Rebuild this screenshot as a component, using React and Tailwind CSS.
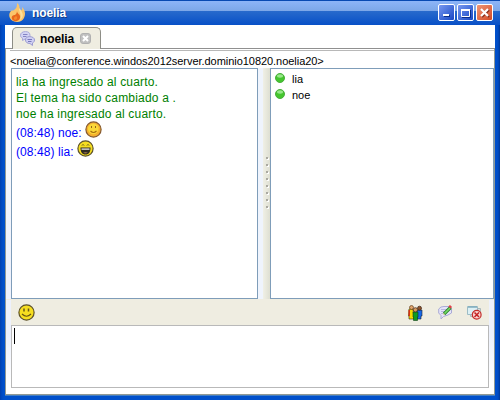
import React from "react";

function Flame() {
  return (
    <svg width="18" height="20" viewBox="0 0 18 20" className="block">
      <path d="M8 0C12 3 9 5 12 7C14 8 13 5 13 4C16 7 17 11 15 15C13 19 8 20 4 18C0 16-1 11 2 8C3 7 4 8 5 7C8 5 8 3 8 0Z" fill="#fbc56a" />
      <path d="M10 5C13 8 15 12 13 15L10 18C14 13 10 10 10 5Z" fill="#ffe09a" />
      <path d="M8 8C8 11 12 11 11 15C10 19 4 19 3 16C2 13 4 12 6 12C7 11 8 10 8 8Z" fill="#e8681c" />
      <path d="M7 13C9 14 8 17 6 17C4 16 5 14 7 13Z" fill="#f58a2c" />
    </svg>
  );
}

function Bubbles() {
  return (
    <svg width="15" height="15" viewBox="0 0 15 15" className="block">
      <path d="M5.500.6C8.500.6 10 2 10 4.300C10 7 7.500 8 5 8L2.500 9.500V7.200C1 6.500.5 5.500.5 4.300C.5 2 2.500.6 5.500.6Z" fill="#d4d4f4" stroke="#a8a8d8" />
      <path d="M3 3.500H7.500M3 5.500H6.500" stroke="#8484c4" />
      <path d="M9.500 5.600C12.500 5.600 14.500 7 14.500 9C14.500 10.500 13.500 11.500 12.500 12V14.500L10 12.500C7 12.500 5.500 11 5.500 9C5.500 7 7 5.600 9.500 5.600Z" fill="#d0d0f4" stroke="#9c9cd0" />
      <path d="M7.500 8.500H12M8 10.500H11.500" stroke="#7878bc" />
    </svg>
  );
}

function Smiley({ kind }) {
  const soft = kind === "soft";
  return (
    <svg width="17" height="17" viewBox="0 0 17 17" className="block shrink-0">
      <circle cx="8.500" cy="8.500" r="7.600" fill={soft ? "#f5b030" : "#f6de20"} stroke={soft ? "#84592f" : "#5d5228"} strokeWidth="1.200" />
      {soft && <circle cx="8.300" cy="7.800" r="5.400" fill="#fad838" />}
      {kind === "grin" ? (
        <g>
          <path d="M5 5.500L6 4.500L7 5.500M10 5.500L11 4.500L12 5.500" stroke="#4c4215" fill="none" />
          <path d="M3.500 7.500H13.500C13.500 12 12 14.500 8.500 14.500S3.500 12 3.500 7.500Z" fill="#2e2a20" />
          <path d="M4.500 8.500H12.500V9.700H4.500Z" fill="#fff" />
          <path d="M6 12.800Q8.500 11.300 11 12.800Q8.500 14 6 12.800Z" fill="#8c6b45" />
        </g>
      ) : (
        <g>
          <path d={soft ? "M6.500 5V7M10.500 5V7" : "M6 4.500V7.500M10.500 4.500V7.500"} stroke={soft ? "#94651b" : "#685918"} strokeWidth={soft ? "1" : "1.500"} />
          <path d={soft ? "M5.500 10Q8.500 13 11.500 10" : "M4 10Q8.500 14.500 13 10"} fill="none" stroke={soft ? "#a46b12" : "#655213"} strokeWidth="1.100" />
        </g>
      )}
    </svg>
  );
}

function People() {
  return (
    <svg width="15" height="16" viewBox="0 0 15 16" className="block">
      <path d="M1 4H5L6 14H1V11H.5Z" fill="#f8dc00" stroke="#292718" strokeWidth=".6" />
      <path d="M.5 5H2V11H.5Z" fill="#d73314" />
      <path d="M9 5H14V11H13V14H9Z" fill="#1768e8" stroke="#17242f" strokeWidth=".6" />
      <circle cx="3.500" cy="2.500" r="2" fill="#dfa36b" stroke="#65401e" strokeWidth=".7" />
      <circle cx="11.500" cy="3.200" r="2" fill="#8d522b" stroke="#3d2719" strokeWidth=".7" />
      <path d="M5 7H10V12H9.500V15.500H5.500V12H5Z" fill="#109b20" stroke="#123e17" strokeWidth=".6" />
      <circle cx="7.400" cy="4.800" r="2.100" fill="#d89b61" stroke="#51331c" strokeWidth=".8" />
    </svg>
  );
}

function EditBubble() {
  return (
    <svg width="15" height="15" viewBox="0 0 15 15" className="block">
      <path d="M6 1.500H12L13.500 4V8L10 10L5.500 11.500L3 14V10.500L.7 8V4L3 2Z" fill="#e4e4fa" stroke="#aaaad6" />
      <path d="M3 4.500H9M3 6.500H8M3 8.500H7" stroke="#b8b8e0" />
      <path d="M6 9L12.500 2.500" stroke="#277f29" strokeWidth="3.200" />
      <path d="M6.500 8.500L12 3" stroke="#75dc64" strokeWidth="1.700" />
      <path d="M11.500 2.500L13 1" stroke="#df4049" strokeWidth="3" />
      <path d="M5 10L5.500 8L7 9.500Z" fill="#efd2a0" />
    </svg>
  );
}

function CloseWindow() {
  return (
    <svg width="15" height="15" viewBox="0 0 15 15" className="block">
      <path d="M3.500 3.500H13.500V11.500H3.500Z" fill="#d4dddd" stroke="#adb9ba" />
      <path d="M.5 1.500H10.500V9.500H.5Z" fill="#dcf0f5" stroke="#9cbcc5" />
      <path d="M1 2H10" stroke="#81adbc" strokeWidth="1.500" />
      <circle cx="9.700" cy="9.700" r="4.400" fill="#f8d2cf" stroke="#c52d2b" strokeWidth="1.200" />
      <path d="M7.500 7.500L12 12M12 7.500L7.500 12" stroke="#c52223" strokeWidth="1.500" />
    </svg>
  );
}

function WindowButton({ type }) {
  const color = type === "close" ? "from-[#ef9474] to-[#d24822]" : "from-[#7898f0] to-[#1745c4]";
  return (
    <div className={`h-[17px] w-[17px] rounded-[2px] border border-white bg-linear-to-br ${color}`}>
      <svg width="15" height="15" viewBox="0 0 15 15" className="block">
        {type === "min" && <><path d="M5 11H11" stroke="#082c89" strokeWidth="2" /><path d="M4 10H10" stroke="white" strokeWidth="2" /></>}
        {type === "max" && <><path d="M4 12.500H12.500V5" fill="none" stroke="#082c89" /><path d="M3.500 4.500H11.500V11.500H3.500Z" fill="none" stroke="white" /><path d="M3 5H12" stroke="white" strokeWidth="2" /></>}
        {type === "close" && <><path d="M5 5L12 12M12 5L5 12" stroke="#872f1c" strokeWidth="2" /><path d="M4 4L11 11M11 4L4 11" stroke="white" strokeWidth="2.200" /></>}
      </svg>
    </div>
  );
}

function Member({ name }) {
  return (
    <div className="flex h-4 items-center gap-[7px] text-[11px]">
      <svg width="10" height="10" viewBox="0 0 10 10"><circle cx="5" cy="5" r="4.500" fill="#45c62e" stroke="#4aad3d" /><ellipse cx="5" cy="3" rx="3" ry="1.700" fill="#98e78a" /></svg>
      <span className="pt-[2px]">{name}</span>
    </div>
  );
}

export default function App() {
  return (
    <main className="flex h-[400px] w-[500px] flex-col overflow-hidden bg-[linear-gradient(90deg,#003fae_0px,#004bc4_2px,#0050cb_4px,#0050cb_496px,#004bc4_498px,#003793_500px)] font-['Liberation_Sans',Arial,sans-serif] leading-none text-black">
      <header className="flex h-[25px] shrink-0 items-start border-t border-[#0849b2] bg-[linear-gradient(#8db5f8_0px,#7ca7e8_10px,#286acc_10px,#0850c7_24px)] pl-[9px] pr-[7px]">
        <div className="pt-[2px]"><Flame /></div>
        <h1 className="ml-[5px] mt-[6px] text-[12px] font-bold leading-[13px] tracking-[-0.1px] text-white [text-shadow:1px_1px_#123c88]">noelia</h1>
        <div className="ml-auto mt-[3px] flex gap-[2px]"><WindowButton type="min" /><WindowButton type="max" /><WindowButton type="close" /></div>
      </header>

      <div className="mx-[5px] flex h-[370px] shrink-0 flex-col bg-white">
        <div className="flex h-[24px] items-end border-b border-[#909090] pl-[7px]">
          <div className="-mb-px flex h-[22px] w-[89px] items-center rounded-t-[5px] border border-b-0 border-[#8d8d86] bg-[#efede1] pl-[7px]">
            <Bubbles />
            <span className="ml-[5px] text-[12px] font-bold tracking-[-0.1px]">noelia</span>
            <svg className="ml-[6px]" width="11" height="11" viewBox="0 0 11 11"><rect x=".5" y=".5" width="10" height="10" rx="2.500" fill="#c0c0c0" stroke="#b0b0b0" /><path d="M3 3L8 8M8 3L3 8" stroke="white" strokeWidth="2" /></svg>
          </div>
        </div>
        <div className="flex h-[346px] flex-col border-x border-b border-[#919994] bg-[linear-gradient(#fff_0px,#fff_18px,#edf1fc_220px,#edf1fc_285px,#fff_335px)] pl-[5px]">
          <div className="mt-px -ml-[1px] h-[19px] shrink-0 border-t border-[#b8b8b8] bg-white pt-[5px] text-[11px] leading-[11px] whitespace-nowrap"><span className="tracking-[-0.045px]">&lt;noelia@conference.windos2012server.dominio10820.noelia20&gt;</span></div>
          <div className="-mt-px flex h-[231px] shrink-0">
            <section className="w-[247px] border border-[#7f9db9] bg-white pl-1 pt-[5px] text-[12px] text-[#008000]">
              <p className="h-4 leading-4"><span className="tracking-[0.17px]">lia ha ingresado al cuarto.</span></p>
              <p className="h-4 leading-4"><span className="tracking-[0.19px]">El tema ha sido cambiado a .</span></p>
              <p className="h-4 leading-4"><span className="tracking-[0.18px]">noe ha ingresado al cuarto.</span></p>
              <div className="-mt-px flex h-[19px] items-start gap-[3px] text-[#0000ff]"><span className="pt-[6px] tracking-[0.08px]">(08:48) noe:</span><Smiley kind="soft" /></div>
              <div className="flex h-[19px] items-start gap-[3px] text-[#0000ff]"><span className="pt-[6px] tracking-[0.08px]">(08:48) lia:</span><Smiley kind="grin" /></div>
            </section>
            <div className="flex w-[12px] justify-end bg-[#eff4fd]">
              <div className="flex w-[7px] flex-col items-center gap-[5px] bg-linear-to-r from-[#f0f0e6] to-[#dedfd2] pt-[89px]">
                {Array.from({ length: 8 }, (_, i) => <i key={i} className="block h-[2px] w-[2px] bg-[#aaa9a1] shadow-[1px_1px_white]" />)}
              </div>
            </div>
            <section className="w-[224px] border border-[#7f9db9] bg-white pl-1 pt-px"><Member name="lia" /><Member name="noe" /></section>
          </div>
          <div className="-ml-[5px] h-px shrink-0 bg-[#efede1]" />
          <div className="flex h-[25px] w-[478px] shrink-0 items-center bg-[#efede1] pl-[7px] pr-[7px]">
            <Smiley kind="smile" />
            <div className="ml-auto flex items-center gap-[14.500px]"><People /><EditBubble /><CloseWindow /></div>
          </div>
          <div className="h-[63px] w-[478px] shrink-0 border border-[#b9b9b9] bg-white pl-[2px] pt-[2px]"><i className="block h-4 w-px bg-black" /></div>
        </div>
      </div>
      <div className="mx-[5px] h-px bg-[#447fc4]" />
    </main>
  );
}
